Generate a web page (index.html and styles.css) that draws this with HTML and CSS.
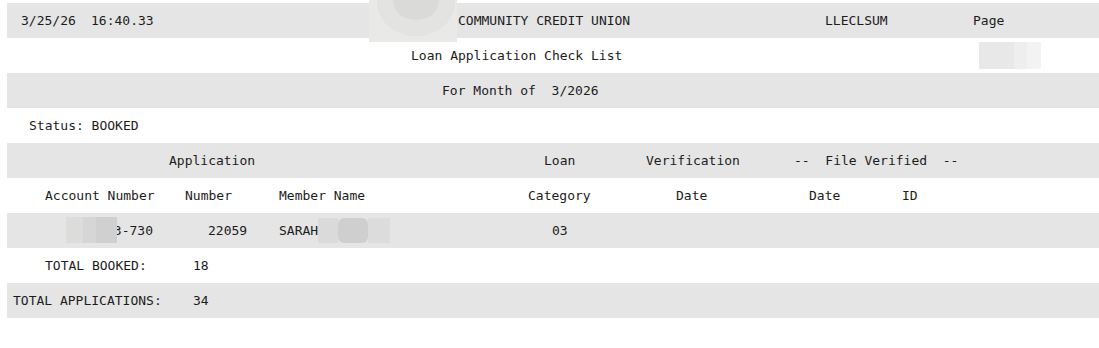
FILE: index.html
```html
<!DOCTYPE html>
<html>
<head>
<meta charset="utf-8">
<link rel="stylesheet" href="styles.css">
</head>
<body>
<div class="page">
  <div class="report">
    <div class="row gray r1">
      <span>3/25/26</span><span>16:40.33</span><span>COMMUNITY CREDIT UNION</span><span>LLECLSUM</span><span>Page</span>
    </div>
    <div class="row r2"><span>Loan Application Check List</span></div>
    <div class="row gray r3"><span>For Month of  3/2026</span></div>
    <div class="row r4"><span>Status: BOOKED</span></div>
    <div class="row gray r5">
      <span>Application</span><span>Loan</span><span>Verification</span><span>--  File Verified  --</span>
    </div>
    <div class="row r6">
      <span>Account Number</span><span>Number</span><span>Member Name</span><span>Category</span><span>Date</span><span>Date</span><span>ID</span>
    </div>
    <div class="row gray r7">
      <span class="acct">3-730</span><span class="appno">22059</span><span class="name">SARAH</span><span class="cat">03</span>
    </div>
    <div class="row r8"><span>TOTAL BOOKED:</span><span>18</span></div>
    <div class="row gray r9"><span>TOTAL APPLICATIONS:</span><span>34</span></div>
  </div>

  <div class="blur blur-top"><div class="ring"></div></div>
  <div class="blur blur-page"><div class="seg s1"></div><div class="seg s2"></div><div class="seg s3"></div></div>
  <div class="blur blur-acct"><div class="seg a1"></div><div class="seg a2"></div><div class="seg a3"></div></div>
  <div class="blur blur-name"><div class="seg n1"></div><div class="seg n2"></div><div class="seg n3"></div></div>
</div>
</body>
</html>
```

FILE: styles.css
```css
html, body {
  margin: 0;
  padding: 0;
  background: #ffffff;
}

.page {
  position: relative;
  width: 1099px;
  height: 348px;
  overflow: hidden;
}

.report {
  margin: 3px 0 0 7px;
  width: 1092px;
  font-family: "DejaVu Sans Mono", "Liberation Mono", monospace;
  font-size: 13px;
  color: #1c1c1c;
}

.row {
  height: 35px;
  display: grid;
  align-items: center;
  white-space: pre;
}

.gray {
  background: #e5e5e5;
}

.r1 { padding-left: 14px; grid-template-columns: 70px 367px 367px 148px auto; }
.r2 { padding-left: 404px; }
.r3 { padding-left: 435px; }
.r4 { padding-left: 22px; }
.r5 { padding-left: 162px; grid-template-columns: 375px 102px 148px auto; }
.r6 { padding-left: 38px; grid-template-columns: 140px 94px 249px 148px 133px 93px auto; }
.r7 { padding-left: 0; grid-template-columns: 146px 55px 71px 273px auto; }
.r7 .acct { grid-column: 1; text-align: right; }
.r7 .appno { grid-column: 3; }
.r7 .name { grid-column: 4; }
.r7 .cat { grid-column: 5; }
.r8 { padding-left: 38px; grid-template-columns: 148px auto; }
.r9 { padding-left: 6px; grid-template-columns: 180px auto; }

.blur {
  position: absolute;
  overflow: hidden;
}

.blur-top {
  left: 369px;
  top: 0;
  width: 88px;
  height: 42px;
  background: #e9e9e7;
}
.blur-top .ring {
  position: absolute;
  left: 8px;
  top: -34px;
  width: 78px;
  height: 70px;
  border-radius: 50%;
  background: #dadad8;
  box-shadow: inset 0 0 0 16px #e3e3e1;
}

.blur-page {
  left: 979px;
  top: 42px;
  width: 62px;
  height: 27px;
  display: flex;
}
.s1 { width: 35px; background: #e8e8e8; }
.s2 { width: 13px; background: #eeeeee; }
.s3 { width: 14px; background: #f3f3f3; }

.blur-acct {
  left: 66px;
  top: 217px;
  width: 51px;
  height: 26px;
  display: flex;
}
.a1 { width: 17px; background: #dcdcda; }
.a2 { width: 13px; background: #d6d6d6; }
.a3 { width: 21px; background: #d0d0d0; }

.blur-name {
  left: 318px;
  top: 218px;
  width: 72px;
  height: 25px;
  display: flex;
}
.n1 { width: 20px; background: #dadada; }
.n2 { width: 30px; background: #cfcfcf; border-radius: 6px; }
.n3 { width: 22px; background: #dcdcdc; }
```
